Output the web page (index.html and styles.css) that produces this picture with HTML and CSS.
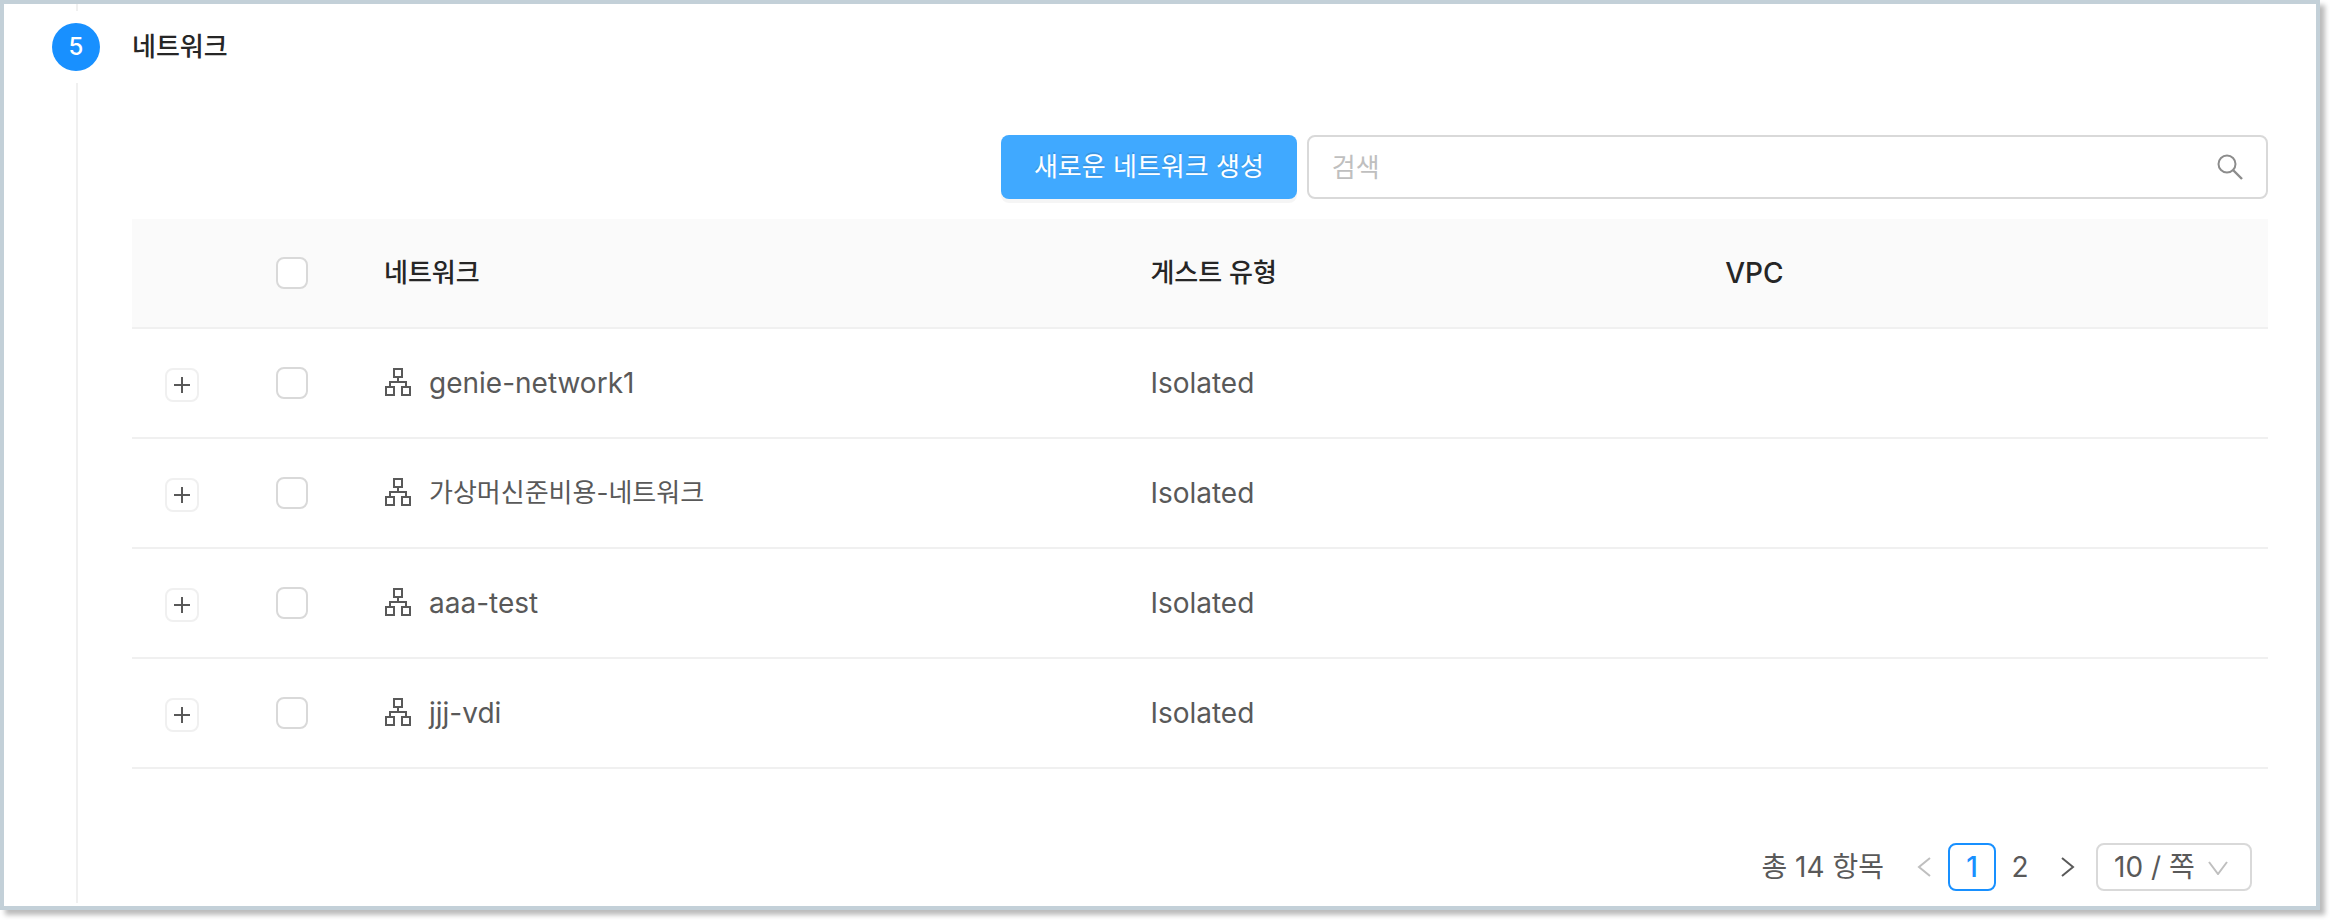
FILE: index.html
```
<!DOCTYPE html>
<html lang="ko">
<head>
    <meta charset="UTF-8">
    <meta name="viewport" content="width=device-width, initial-scale=1.0">
    <title>네트워크</title>
    <link rel="stylesheet" href="styles.css">
</head>
<body>
<!-- shared icons -->
<svg class="sprite" aria-hidden="true">
    <symbol id="icon-network" viewBox="0 0 26 28">
        <path d="M9 1h8v8H9zM1 19h8v8H1zM17 19h8v8h-8zM13 10v4M5 18v-4h16v4" fill="none" stroke="currentColor" stroke-width="2"/>
    </symbol>
    <symbol id="icon-plus" viewBox="0 0 16 16">
        <path d="M8 0v16M0 8h16" fill="none" stroke="currentColor" stroke-width="2"/>
    </symbol>
</svg>
<main class="panel">
    <section class="step">
        <div class="rail">
            <span class="rail-line rail-line-top"></span>
            <span class="step-number">5</span>
            <span class="rail-line rail-line-bottom"></span>
        </div>
        <div class="step-content">
            <h2 class="step-title">네트워크</h2>
            <div class="toolbar">
                <button type="button" class="btn-primary">새로운 네트워크 생성</button>
                <div class="search">
                    <input type="text" class="search-input" placeholder="검색" aria-label="검색">
                    <svg class="search-icon" viewBox="0 0 26 26" aria-hidden="true">
                        <circle cx="10" cy="10" r="8.5" fill="none" stroke="currentColor" stroke-width="2"/>
                        <path d="M16 16l9 9" fill="none" stroke="currentColor" stroke-width="2.4"/>
                    </svg>
                </div>
            </div>
            <table class="network-table">
                <thead>
                <tr>
                    <th></th>
                    <th class="cell-center"><input type="checkbox" class="checkbox" aria-label="모두 선택"></th>
                    <th>네트워크</th>
                    <th>게스트 유형</th>
                    <th class="latin">VPC</th>
                </tr>
                </thead>
                <tbody>
                <tr>
                    <td class="cell-expand"><button type="button" class="btn-expand" aria-label="펼치기"><svg><use href="#icon-plus"/></svg></button></td>
                    <td class="cell-center"><input type="checkbox" class="checkbox" aria-label="genie-network1"></td>
                    <td class="latin"><svg class="network-icon"><use href="#icon-network"/></svg>genie-network1</td>
                    <td class="latin">Isolated</td>
                    <td></td>
                </tr>
                <tr>
                    <td class="cell-expand"><button type="button" class="btn-expand" aria-label="펼치기"><svg><use href="#icon-plus"/></svg></button></td>
                    <td class="cell-center"><input type="checkbox" class="checkbox" aria-label="가상머신준비용-네트워크"></td>
                    <td><svg class="network-icon"><use href="#icon-network"/></svg>가상머신준비용-네트워크</td>
                    <td class="latin">Isolated</td>
                    <td></td>
                </tr>
                <tr>
                    <td class="cell-expand"><button type="button" class="btn-expand" aria-label="펼치기"><svg><use href="#icon-plus"/></svg></button></td>
                    <td class="cell-center"><input type="checkbox" class="checkbox" aria-label="aaa-test"></td>
                    <td class="latin"><svg class="network-icon"><use href="#icon-network"/></svg>aaa-test</td>
                    <td class="latin">Isolated</td>
                    <td></td>
                </tr>
                <tr>
                    <td class="cell-expand"><button type="button" class="btn-expand" aria-label="펼치기"><svg><use href="#icon-plus"/></svg></button></td>
                    <td class="cell-center"><input type="checkbox" class="checkbox" aria-label="jjj-vdi"></td>
                    <td class="latin"><svg class="network-icon"><use href="#icon-network"/></svg>jjj-vdi</td>
                    <td class="latin">Isolated</td>
                    <td></td>
                </tr>
                </tbody>
            </table>
            <nav class="pagination" aria-label="페이지">
                <span class="total">총 14 항목</span>
                <button type="button" class="page" disabled aria-label="이전">
                    <svg class="arrow" viewBox="0 0 14 20"><path d="M13 1L2 10l11 9" fill="none" stroke="currentColor" stroke-width="2"/></svg>
                </button>
                <button type="button" class="page page-active" aria-current="page">1</button>
                <button type="button" class="page">2</button>
                <button type="button" class="page" aria-label="다음">
                    <svg class="arrow" viewBox="0 0 14 20"><path d="M1 1l11 9-11 9" fill="none" stroke="currentColor" stroke-width="2"/></svg>
                </button>
                <div class="page-size">
                    <select aria-label="페이지 크기">
                        <option>10 / 쪽</option>
                        <option>20 / 쪽</option>
                        <option>40 / 쪽</option>
                    </select>
                    <svg class="page-size-icon" viewBox="0 0 20 14" aria-hidden="true"><path d="M1 1l9 12 9-12" fill="none" stroke="currentColor" stroke-width="2"/></svg>
                </div>
            </nav>
        </div>
    </section>
</main>
</body>
</html>
```
FILE: styles.css
```
* {
    box-sizing: border-box;
}

body {
    margin: 0;
    background: #fff;
    color: #595959;
    font-family: Inter, 'Noto Sans CJK KR', sans-serif;
    font-size: 26px;
    line-height: 44px;
}

button, input, select {
    font: inherit;
    color: inherit;
    margin: 0;
}

button {
    cursor: pointer;
}

.sprite {
    display: none;
}

.panel {
    margin: 0 10px 10px 0;
    padding: 0 48px 3px;
    border: 4px solid #c3d0d8;
    background: #fff;
    box-shadow: 5px 5px 5px rgba(0, 0, 0, .27);
}

.step {
    display: grid;
    grid-template-columns: 48px 1fr;
    column-gap: 32px;
}

/* vertical line with the step number */
.rail {
    display: flex;
    flex-direction: column;
    gap: 12px;
}

.rail-line {
    width: 2px;
    margin-left: 24px;
    background: #f0f0f0;
}

.rail-line-top {
    height: 7px;
}

.rail-line-bottom {
    flex: 1;
}

.step-number {
    height: 48px;
    border-radius: 50%;
    background: #1890ff;
    color: #fff;
    font-size: 24px;
    font-weight: 500;
    line-height: 48px;
    text-align: center;
}

.step-content {
    padding: 19px 0 12px;
}

.step-title {
    margin: 0 0 64px;
    color: #262626;
    font-size: 26px;
    font-weight: 500;
    line-height: 48px;
}

.toolbar {
    display: flex;
    justify-content: flex-end;
    gap: 10px;
    margin-bottom: 20px;
}

.btn-primary {
    height: 64px;
    padding: 0 33px;
    border: none;
    border-radius: 8px;
    background: #40a9ff;
    color: #fff;
    text-shadow: 0 -2px 0 rgba(0, 0, 0, .12);
    box-shadow: 0 4px 0 rgba(0, 0, 0, .04);
}

.search {
    position: relative;
    width: 45%;
}

.search-input {
    display: block;
    width: 100%;
    height: 64px;
    padding: 0 64px 0 23px;
    border: 2px solid #d9d9d9;
    border-radius: 8px;
    background: #fff;
}

.search-input::placeholder {
    color: #bfbfbf;
}

.search-icon {
    position: absolute;
    top: 19px;
    right: 25px;
    width: 26px;
    height: 26px;
    color: #8c8c8c;
}

.network-table {
    display: block;
}

.network-table thead, .network-table tbody {
    display: block;
}

.network-table tr {
    display: grid;
    grid-template-columns: 100px 120px 4fr 3fr 3fr;
    height: 110px;
    border-bottom: 2px solid #f0f0f0;
}

.network-table thead tr {
    background: #fafafa;
}

.network-table th, .network-table td {
    display: flex;
    align-items: center;
    padding: 0 32px;
}

.network-table th {
    color: #262626;
    font-weight: 500;
}

.network-table .cell-center, .network-table .cell-expand {
    justify-content: center;
    padding: 0;
}

.network-table .cell-expand {
    padding-top: 4px;
}

/* latin glyphs run smaller than hangul */
.latin {
    font-size: 28px;
}

.checkbox {
    appearance: none;
    width: 32px;
    height: 32px;
    border: 2px solid #d9d9d9;
    border-radius: 8px;
    background: #fff;
}

.checkbox:checked {
    border-color: #1890ff;
    background: #1890ff;
}

.btn-expand {
    display: flex;
    align-items: center;
    justify-content: center;
    width: 34px;
    height: 34px;
    padding: 0;
    border: 2px solid #f0f0f0;
    border-radius: 8px;
    background: #fff;
}

.btn-expand svg {
    width: 16px;
    height: 16px;
}

.network-icon {
    flex: none;
    width: 26px;
    height: 28px;
    margin: 0 18px 2px 1px;
}

.pagination {
    display: flex;
    align-items: center;
    justify-content: flex-end;
    margin-top: 74px;
    padding-right: 16px;
    font-size: 28px;
}

.total {
    margin-right: 16px;
}

.page {
    display: flex;
    align-items: center;
    justify-content: center;
    width: 48px;
    height: 48px;
    padding: 0;
    border: 2px solid transparent;
    border-radius: 8px;
    background: #fff;
}

.page:disabled {
    color: #bfbfbf;
    cursor: not-allowed;
}

.page-active {
    border-color: #1890ff;
    color: #1890ff;
    font-weight: 500;
}

.arrow {
    width: 14px;
    height: 20px;
}

.page-size {
    position: relative;
    margin-left: 4px;
}

.page-size select {
    display: block;
    appearance: none;
    width: 156px;
    height: 48px;
    padding: 0 16px;
    border: 2px solid #d9d9d9;
    border-radius: 8px;
    background: #fff;
}

.page-size-icon {
    position: absolute;
    top: 18px;
    right: 24px;
    width: 20px;
    height: 14px;
    color: #bfbfbf;
    pointer-events: none;
}
```
